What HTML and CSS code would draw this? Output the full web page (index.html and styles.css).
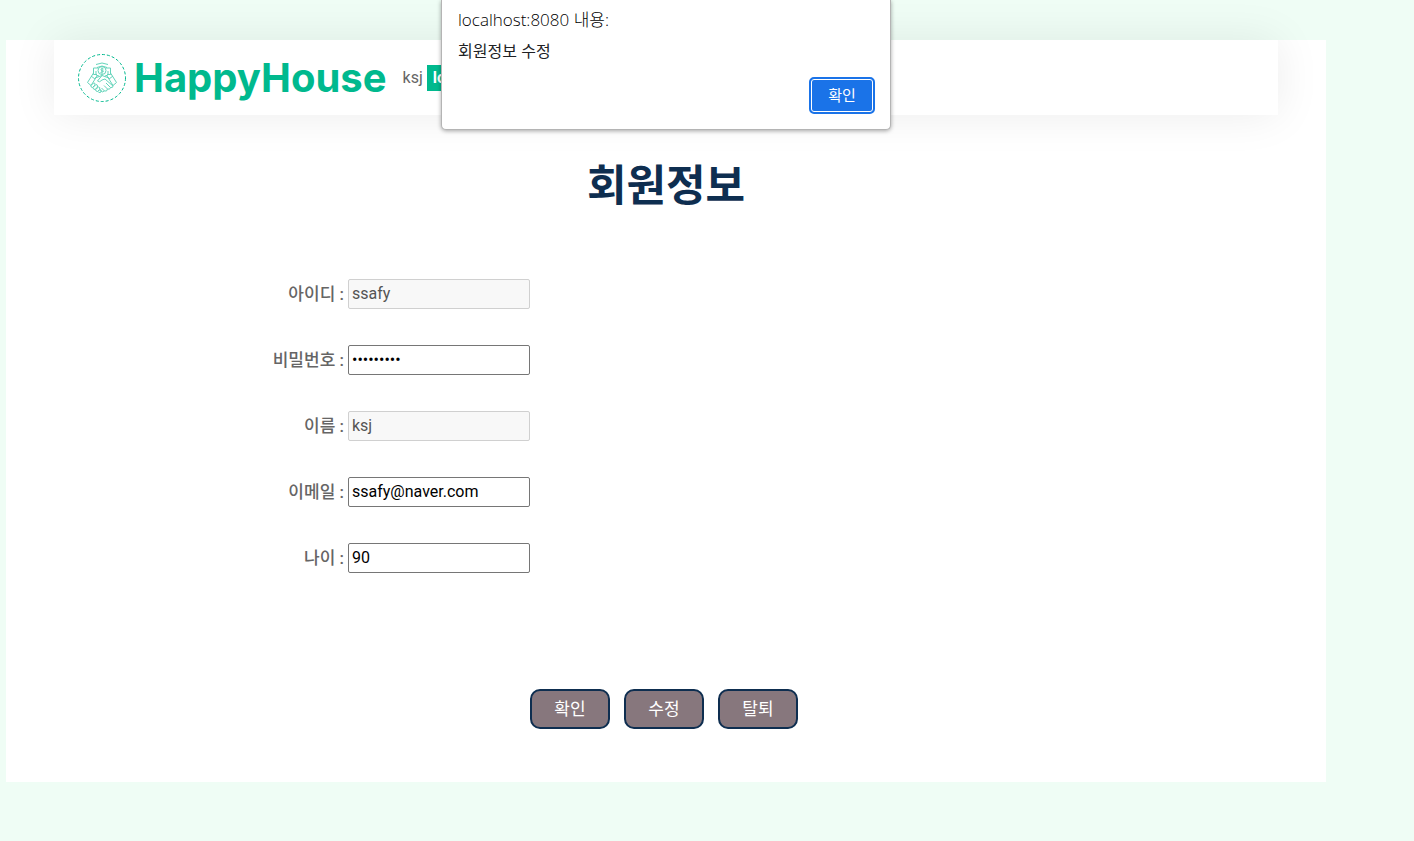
FILE: index.html
```html
<!DOCTYPE html>
<html lang="ko">
<head>
<meta charset="utf-8">
<title>HappyHouse</title>
<link rel="stylesheet" href="styles.css">
</head>
<body>
<div class="page">
  <header class="navbar">
    <a class="brand" href="#">
      <svg class="brand-icon" viewBox="0 0 48 48" aria-hidden="true">
        <circle class="ring" cx="24" cy="24" r="23.5"/>
        <g class="lines">
          <path d="M18 10.500Q24 7.500 30 10.500M19 13.500Q24 10.500 29 13.500"/>
          <circle cx="24" cy="16.500" r="4"/>
          <path d="M25.500 15Q23 14 23 15.500T25 17T22.500 18.500M24 13.500V20M20 14H15.500V20.500H19M28 14H32.500V20.500H29M18 17V21L21 22M30 17V21L27 22"/>
          <path d="M15.500 19L9.500 28.500L13 31.500L19 22M13 22L17 25M32.500 19L38.500 28.500L35 31.500L29 22M35 22L31 25"/>
          <path d="M17 24L24 21.500L19.500 27Q21.500 29 24 26L27 25L35 32Q35 34 32.500 33.500L28 29M32.500 33.500Q32 36 29.500 35L26 31.500M29.500 35Q29 38 26.500 37L23.500 34M26.500 37Q24.500 39 22 36.500M24 21.500L31 24"/>
          <path d="M13 31.500L15.500 29Q17.500 28.500 17 31L14.500 33.500Q12.500 33.500 13 31.500M15 33.500L18 30.500Q20 30.500 19.500 33L17 35.500Q15 35.500 15 33.500M17.500 35.500L20.500 33Q22.500 33 21.500 35.500L19.500 37.500Q17.500 37.500 17.500 35.500M20 37.500L22 35.500Q24.500 36 22.500 38.500Q20.500 39 20 37.500"/>
        </g>
      </svg>
      <span class="brand-name">HappyHouse</span>
    </a>
    <div class="session">
      <span>ksj</span>
      <a class="logout" href="#">logout</a>
    </div>
  </header>
  <main class="content">
    <h1 class="title">회원정보</h1>
    <form class="member-form">
      <div class="row">
        <label for="userid">아이디 :</label>
        <input class="field" id="userid" type="text" value="ssafy" disabled>
      </div>
      <div class="row">
        <label for="userpwd">비밀번호 :</label>
        <input class="field" id="userpwd" type="password" value="ssafyssaf">
      </div>
      <div class="row">
        <label for="username">이름 :</label>
        <input class="field" id="username" type="text" value="ksj" disabled>
      </div>
      <div class="row">
        <label for="email">이메일 :</label>
        <input class="field" id="email" type="text" value="ssafy@naver.com">
      </div>
      <div class="row">
        <label for="age">나이 :</label>
        <input class="field" id="age" type="text" value="90">
      </div>
      <div class="actions">
        <button class="action" type="button">확인</button>
        <button class="action" type="button">수정</button>
        <button class="action" type="button">탈퇴</button>
      </div>
    </form>
  </main>
</div>
<div class="dialog" role="alertdialog" aria-labelledby="dialog-title" aria-describedby="dialog-message">
  <div class="dialog-title" id="dialog-title">localhost:8080 내용:</div>
  <p class="dialog-message" id="dialog-message">회원정보 수정</p>
  <button class="dialog-ok" type="button">확인</button>
</div>
</body>
</html>
```
FILE: styles.css
```css
* {
  box-sizing: border-box;
}

body {
  margin: 0;
  background: #effdf5;
  color: #666565;
  font: 16px/24px Roboto, "Noto Sans CJK KR", sans-serif;
}

.page {
  margin: 40px 88px 0 6px;
  padding: 0 48px 53px;
  background: #fff;
}

.navbar {
  display: flex;
  align-items: center;
  gap: 16px;
  padding: 14px 24px 13px;
  background: #fff;
  box-shadow: 0 0 45px rgba(0, 0, 0, 0.08);
}

.brand {
  display: flex;
  align-items: center;
  gap: 8px;
  color: #00b98e;
  text-decoration: none;
}

.brand-icon {
  width: 48px;
  height: 48px;
  fill: none;
  stroke: #00b98e;
}

.ring {
  stroke-width: 1;
  stroke-dasharray: 3 2;
}

.lines {
  stroke-width: 1;
  opacity: 0.6;
}

.brand-name {
  font: 700 40px/48px Inter, sans-serif;
}

.session {
  display: flex;
  align-items: center;
  gap: 4px;
}

.logout {
  padding: 1px 6px;
  background: #00b98e;
  color: #fff;
  font-weight: 700;
  text-decoration: none;
}

.title {
  margin: 37px 0 67px;
  color: #0e2e50;
  font: 700 43px/60px "Noto Sans CJK KR", sans-serif;
  text-align: center;
}

.member-form {
  display: flex;
  flex-direction: column;
  gap: 36px;
}

.row {
  display: grid;
  grid-template-columns: 290px 182px;
  align-items: center;
  gap: 4px;
}

.row label {
  font-size: 17px;
  font-weight: 500;
  text-align: right;
}

.field {
  height: 30px;
  padding: 0 3px 2px;
  border: 1px solid #767676;
  border-radius: 2px;
  background: #fff;
  color: #000;
  font: 16px/24px Roboto, sans-serif;
}

.field:disabled {
  border-color: #d0d0d0;
  background: #f8f8f8;
  color: #545454;
}

.actions {
  display: flex;
  justify-content: center;
  gap: 14px;
  margin-top: 80px;
  padding-right: 4px;
}

.action {
  width: 80px;
  height: 40px;
  padding: 0 0 2px;
  border: 2px solid #0e2e50;
  border-radius: 10px;
  background: #87777d;
  color: #fff;
  font: 17px/24px "Noto Sans CJK KR", sans-serif;
}

.dialog {
  position: absolute;
  top: 0;
  left: calc(50% - 266px);
  display: flex;
  flex-direction: column;
  width: 450px;
  padding: 8px 15px 15px 16px;
  border: 1px solid #b4b4b4;
  border-top: 0;
  border-radius: 0 0 5px 5px;
  background: #fff;
  box-shadow: 0 1px 4px rgba(0, 0, 0, 0.35);
  color: #202124;
}

.dialog-title {
  color: #000;
  font: 300 17px/24px "Open Sans", "Noto Sans CJK KR", sans-serif;
}

.dialog-message {
  margin: 7px 0 16px;
  font: 16px/22px "Noto Sans CJK KR", sans-serif;
}

.dialog-ok {
  align-self: flex-end;
  width: 66px;
  height: 37px;
  padding: 0 0 2px;
  border: 2px solid #1a73e8;
  border-radius: 5px;
  background: #1a73e8;
  box-shadow: inset 0 0 0 1px #fff;
  color: #fff;
  font: 15px/20px "Noto Sans CJK KR", sans-serif;
}
```
